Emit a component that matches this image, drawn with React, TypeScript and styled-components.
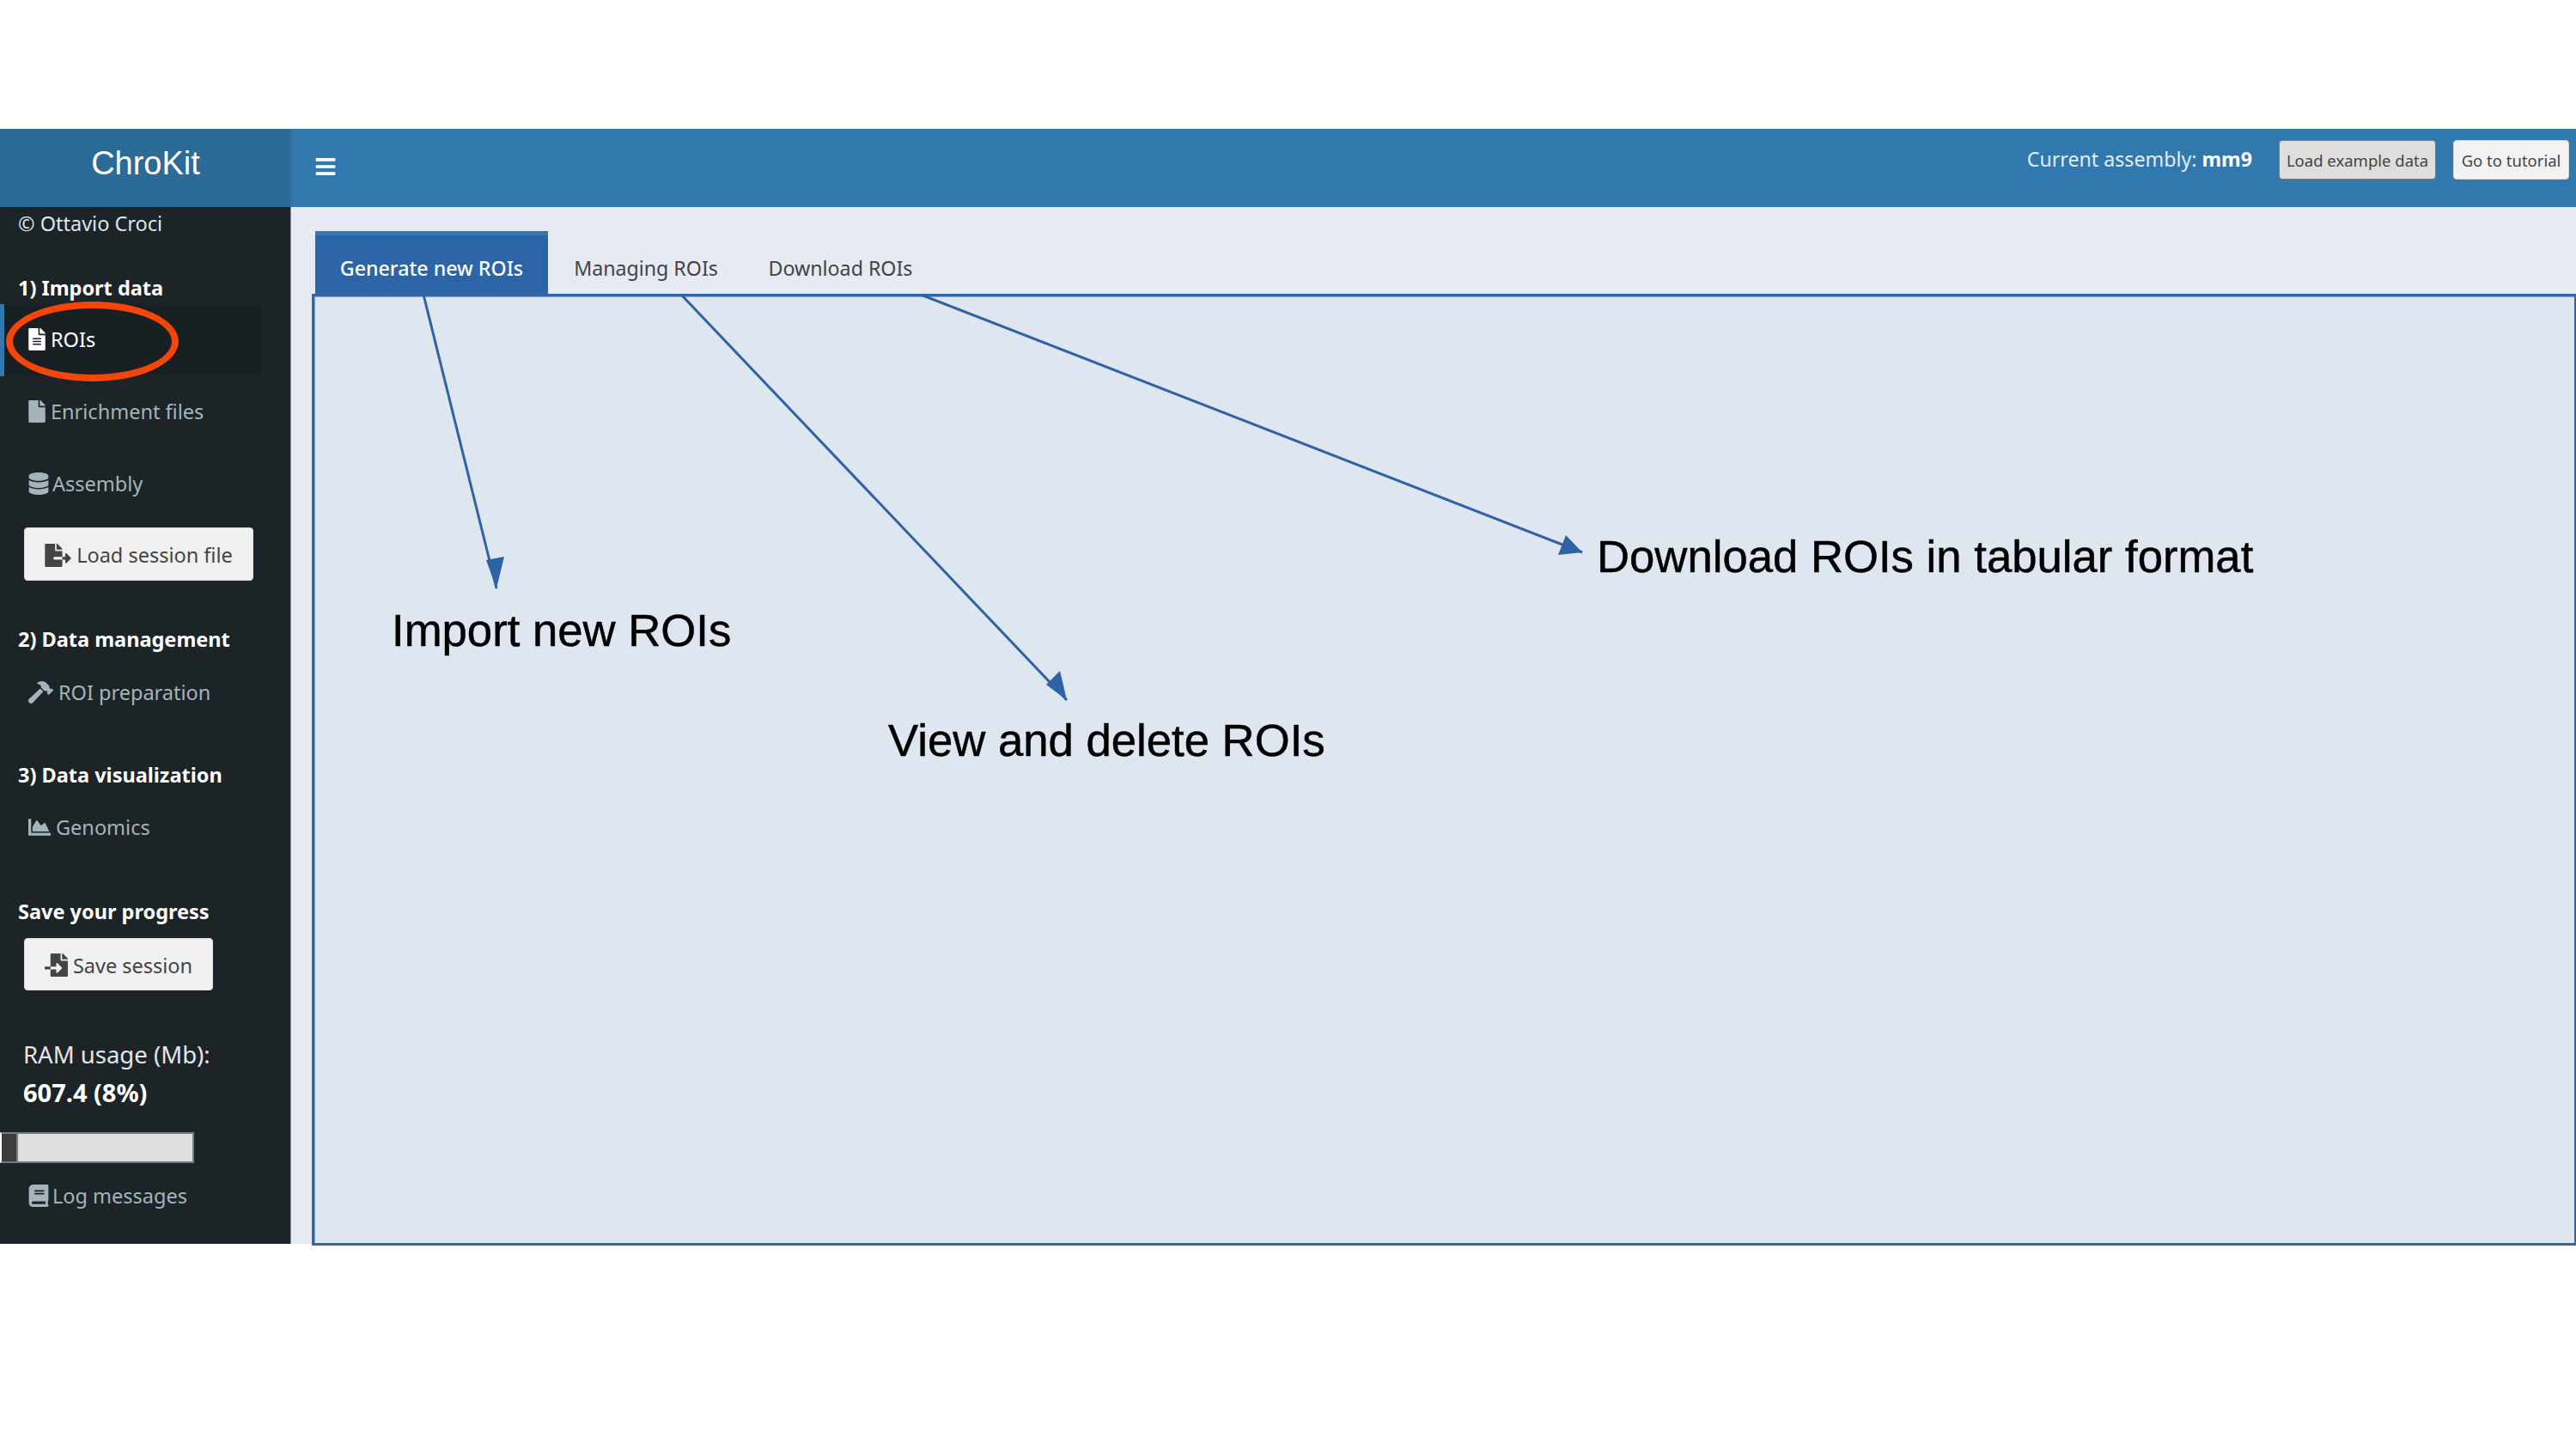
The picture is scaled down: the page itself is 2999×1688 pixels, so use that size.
import styled, { createGlobalStyle } from "styled-components";
import {
  FaBars,
  FaBook,
  FaChartArea,
  FaDatabase,
  FaFile,
  FaFileAlt,
  FaFileExport,
  FaFileImport,
  FaHammer,
} from "react-icons/fa";

const GlobalStyle = createGlobalStyle`
  html, body {
    margin: 0;
    background: #ffffff;
  }
  #root {
    height: 1688px;
    overflow: hidden;
    padding-top: 150px;
    box-sizing: border-box;
  }
  * {
    box-sizing: border-box;
  }
`;

const Shell = styled.div`
  display: grid;
  grid-template-columns: 339px 1fr;
  height: 1298px;
  font-family: "Noto Sans", "Open Sans", sans-serif;
`;

const Sidebar = styled.aside`
  position: relative;
  display: flex;
  flex-direction: column;
  background: #1c2428;
  color: #b8c7ce;
  border-right: 1px solid #8f979b;
`;

const Brand = styled.div`
  height: 91px;
  margin-right: -1px;
  background: #2c6a97;
  color: #ffffff;
  font-family: "Liberation Sans", Arial, sans-serif;
  font-size: 38px;
  line-height: 80px;
  text-align: center;
`;

const Copyright = styled.div`
  height: 40px;
  padding-left: 21px;
  font-size: 23.5px;
  line-height: 38px;
  color: #dfe5e8;
`;

const SideHeading = styled.div<{ $top: number }>`
  height: 36px;
  margin-top: ${(p) => p.$top}px;
  padding-left: 21px;
  font-size: 23.5px;
  font-weight: 700;
  line-height: 34px;
  color: #ffffff;
`;

const NavItem = styled.a<{ $active?: boolean; $top?: number; $gap?: number; $icon: number }>`
  display: flex;
  align-items: center;
  gap: ${(p) => p.$gap ?? 6}px;
  flex: none;
  height: 84px;
  width: 304px;
  margin-top: ${(p) => p.$top ?? 0}px;
  padding-bottom: 2px;
  padding-left: ${(p) => (p.$active ? 28 : 33)}px;
  font-size: 23.5px;
  color: ${(p) => (p.$active ? "#ffffff" : "#a3b4bc")};
  background: ${(p) => (p.$active ? "#182024" : "transparent")};
  border-left: ${(p) => (p.$active ? "5px solid #3078ae" : "none")};

  svg {
    flex: none;
    width: ${(p) => p.$icon}px;
    height: 26px;
  }
`;

const SideButton = styled.button<{ $top: number; $width: number; $height: number; $icon: number }>`
  display: flex;
  align-items: center;
  justify-content: center;
  gap: 6px;
  flex: none;
  width: ${(p) => p.$width}px;
  height: ${(p) => p.$height}px;
  margin: ${(p) => p.$top}px 0 0 28px;
  padding: 2px 0 0;
  font: inherit;
  font-size: 23.5px;
  color: #444444;
  background: #f0f0f0;
  border: 1px solid #dcdcdc;
  border-radius: 4px;

  svg {
    flex: none;
    width: ${(p) => p.$icon}px;
    height: 27px;
  }
`;

const RamBlock = styled.div`
  margin-top: 53px;
  padding-left: 27px;
  font-size: 27.5px;
  line-height: 44px;
  color: #e2e7ea;

  strong {
    display: block;
    font-size: 29px;
    color: #ffffff;
  }
`;

const RamBar = styled.div`
  flex: none;
  width: 226px;
  height: 36px;
  margin-top: 24px;
  margin-bottom: -3px;
  background: #dedede;
  border: 2px solid #77797a;
  border-left: 2px solid #ffffff;
`;

const RamFill = styled.div`
  height: 100%;
  background: #3c3c3c;
  border-right: 2px solid #77797a;
`;

const Oval = styled.div`
  position: absolute;
  left: 7px;
  top: 201px;
  width: 201px;
  height: 93px;
  border: 8px solid #f5460a;
  border-radius: 50%;
  pointer-events: none;
`;

const Main = styled.main`
  display: flex;
  flex-direction: column;
  min-width: 0;
  background: #e5eaf3;
`;

const TopBar = styled.header`
  display: flex;
  align-items: flex-start;
  flex: none;
  height: 91px;
  padding: 13px 8px 0 27px;
  background: #3078ae;
  color: #ffffff;
`;

const MenuToggle = styled.span`
  display: flex;
  height: 62px;
  align-items: center;
  font-size: 26px;
`;

const Assembly = styled.span`
  margin-left: auto;
  font-size: 23.2px;
  line-height: 44px;
  color: #e3edf5;

  strong {
    color: #ffffff;
  }
`;

const TopButton = styled.button<{ $pressed?: boolean; $width: number; $gap: number }>`
  width: ${(p) => p.$width}px;
  height: 46px;
  margin-left: ${(p) => p.$gap}px;
  padding: 0;
  font: inherit;
  font-size: 18.5px;
  color: #444444;
  background: ${(p) => (p.$pressed ? "#dedede" : "#f2f2f2")};
  border: 1px solid ${(p) => (p.$pressed ? "#7a7a7a" : "#d6d6d6")};
  border-radius: 4px;
`;

const Content = styled.div`
  display: flex;
  flex-direction: column;
  flex: 1;
  padding: 28px 0 0 24px;
`;

const Tabs = styled.nav`
  display: flex;
  flex: none;
  height: 73px;
  margin-left: 4px;
`;

const Tab = styled.a<{ $active?: boolean; $width: number }>`
  display: flex;
  justify-content: center;
  align-items: center;
  width: ${(p) => p.$width}px;
  padding-top: 7px;
  font-size: 23.2px;
  color: ${(p) => (p.$active ? "#ffffff" : "#444444")};
  font-weight: ${(p) => (p.$active ? 500 : 400)};
  background: ${(p) => (p.$active ? "#2b65a8" : "transparent")};
  border-top: 5px solid ${(p) => (p.$active ? "#3279ad" : "transparent")};
`;

const Panel = styled.section`
  position: relative;
  flex: 1;
  margin-bottom: -2px;
  background: #dee6f0;
  border: 3px solid #3265a9;
  border-width: 3px 2px 3px 3px;
  box-shadow: inset 1px 1px 0 #7ba2d2;
`;

const Arrows = styled.svg`
  position: absolute;
  left: -3px;
  top: -3px;
`;

const Note = styled.span<{ $x: number; $y: number }>`
  position: absolute;
  left: ${(p) => p.$x}px;
  top: ${(p) => p.$y}px;
  font-family: "Liberation Sans", Arial, sans-serif;
  font-size: 52.7px;
  line-height: 64px;
  white-space: nowrap;
  color: #000000;
  -webkit-text-stroke: 0.5px #000000;
`;

// arrow ends, relative to the panel corner at (363, 342)
const arrows = [
  { x1: 130, y1: 1, x2: 215, y2: 343, head: "215,343 203,310 224,306" },
  { x1: 430, y1: 1, x2: 879, y2: 473, head: "879,473 855,455 871,439" },
  { x1: 709, y1: 1, x2: 1479, y2: 301, head: "1479,301 1451,304 1460,281" },
];

export default function App() {
  return (
    <>
      <GlobalStyle />
      <Shell>
        <Sidebar>
          <Brand>ChroKit</Brand>
          <Copyright>© Ottavio Croci</Copyright>

          <SideHeading $top={37}>1) Import data</SideHeading>
          <NavItem $active $icon={20}>
            <FaFileAlt />
            ROIs
          </NavItem>
          <NavItem $icon={20}>
            <FaFile />
            Enrichment files
          </NavItem>
          <NavItem $gap={4} $icon={24}>
            <FaDatabase />
            Assembly
          </NavItem>
          <SideButton $top={8} $width={267} $height={62} $icon={31}>
            <FaFileExport />
            Load session file
          </SideButton>

          <SideHeading $top={51}>2) Data management</SideHeading>
          <NavItem $top={2} $icon={29}>
            <FaHammer />
            ROI preparation
          </NavItem>

          <SideHeading $top={36}>3) Data visualization</SideHeading>
          <NavItem $top={1} $icon={26}>
            <FaChartArea />
            Genomics
          </NavItem>

          <SideHeading $top={38}>Save your progress</SideHeading>
          <SideButton $top={12} $width={220} $height={61} $icon={27}>
            <FaFileImport />
            Save session
          </SideButton>

          <RamBlock>
            RAM usage (Mb):
            <strong>607.4 (8%)</strong>
          </RamBlock>
          <RamBar>
            <RamFill style={{ width: 19 }} />
          </RamBar>
          <NavItem $gap={4} $icon={24}>
            <FaBook />
            Log messages
          </NavItem>

          <Oval />
        </Sidebar>

        <Main>
          <TopBar>
            <MenuToggle>
              <FaBars />
            </MenuToggle>
            <Assembly>
              Current assembly: <strong>mm9</strong>
            </Assembly>
            <TopButton $pressed $width={183} $gap={31}>
              Load example data
            </TopButton>
            <TopButton $width={135} $gap={20}>
              Go to tutorial
            </TopButton>
          </TopBar>

          <Content>
            <Tabs>
              <Tab $active $width={271}>
                Generate new ROIs
              </Tab>
              <Tab $width={228}>Managing ROIs</Tab>
              <Tab $width={225}>Download ROIs</Tab>
            </Tabs>
            <Panel>
              <Arrows width="2640" height="1110">
                {arrows.map((a) => (
                  <g key={a.head}>
                    <line x1={a.x1} y1={a.y1} x2={a.x2} y2={a.y2} stroke="#2e62a5" strokeWidth="3" />
                    <polygon points={a.head} fill="#2e62a5" />
                  </g>
                ))}
              </Arrows>
              <Note $x={90} $y={357}>
                Import new ROIs
              </Note>
              <Note $x={668} $y={485}>
                View and delete ROIs
              </Note>
              <Note $x={1493} $y={271}>
                Download ROIs in tabular format
              </Note>
            </Panel>
          </Content>
        </Main>
      </Shell>
    </>
  );
}
